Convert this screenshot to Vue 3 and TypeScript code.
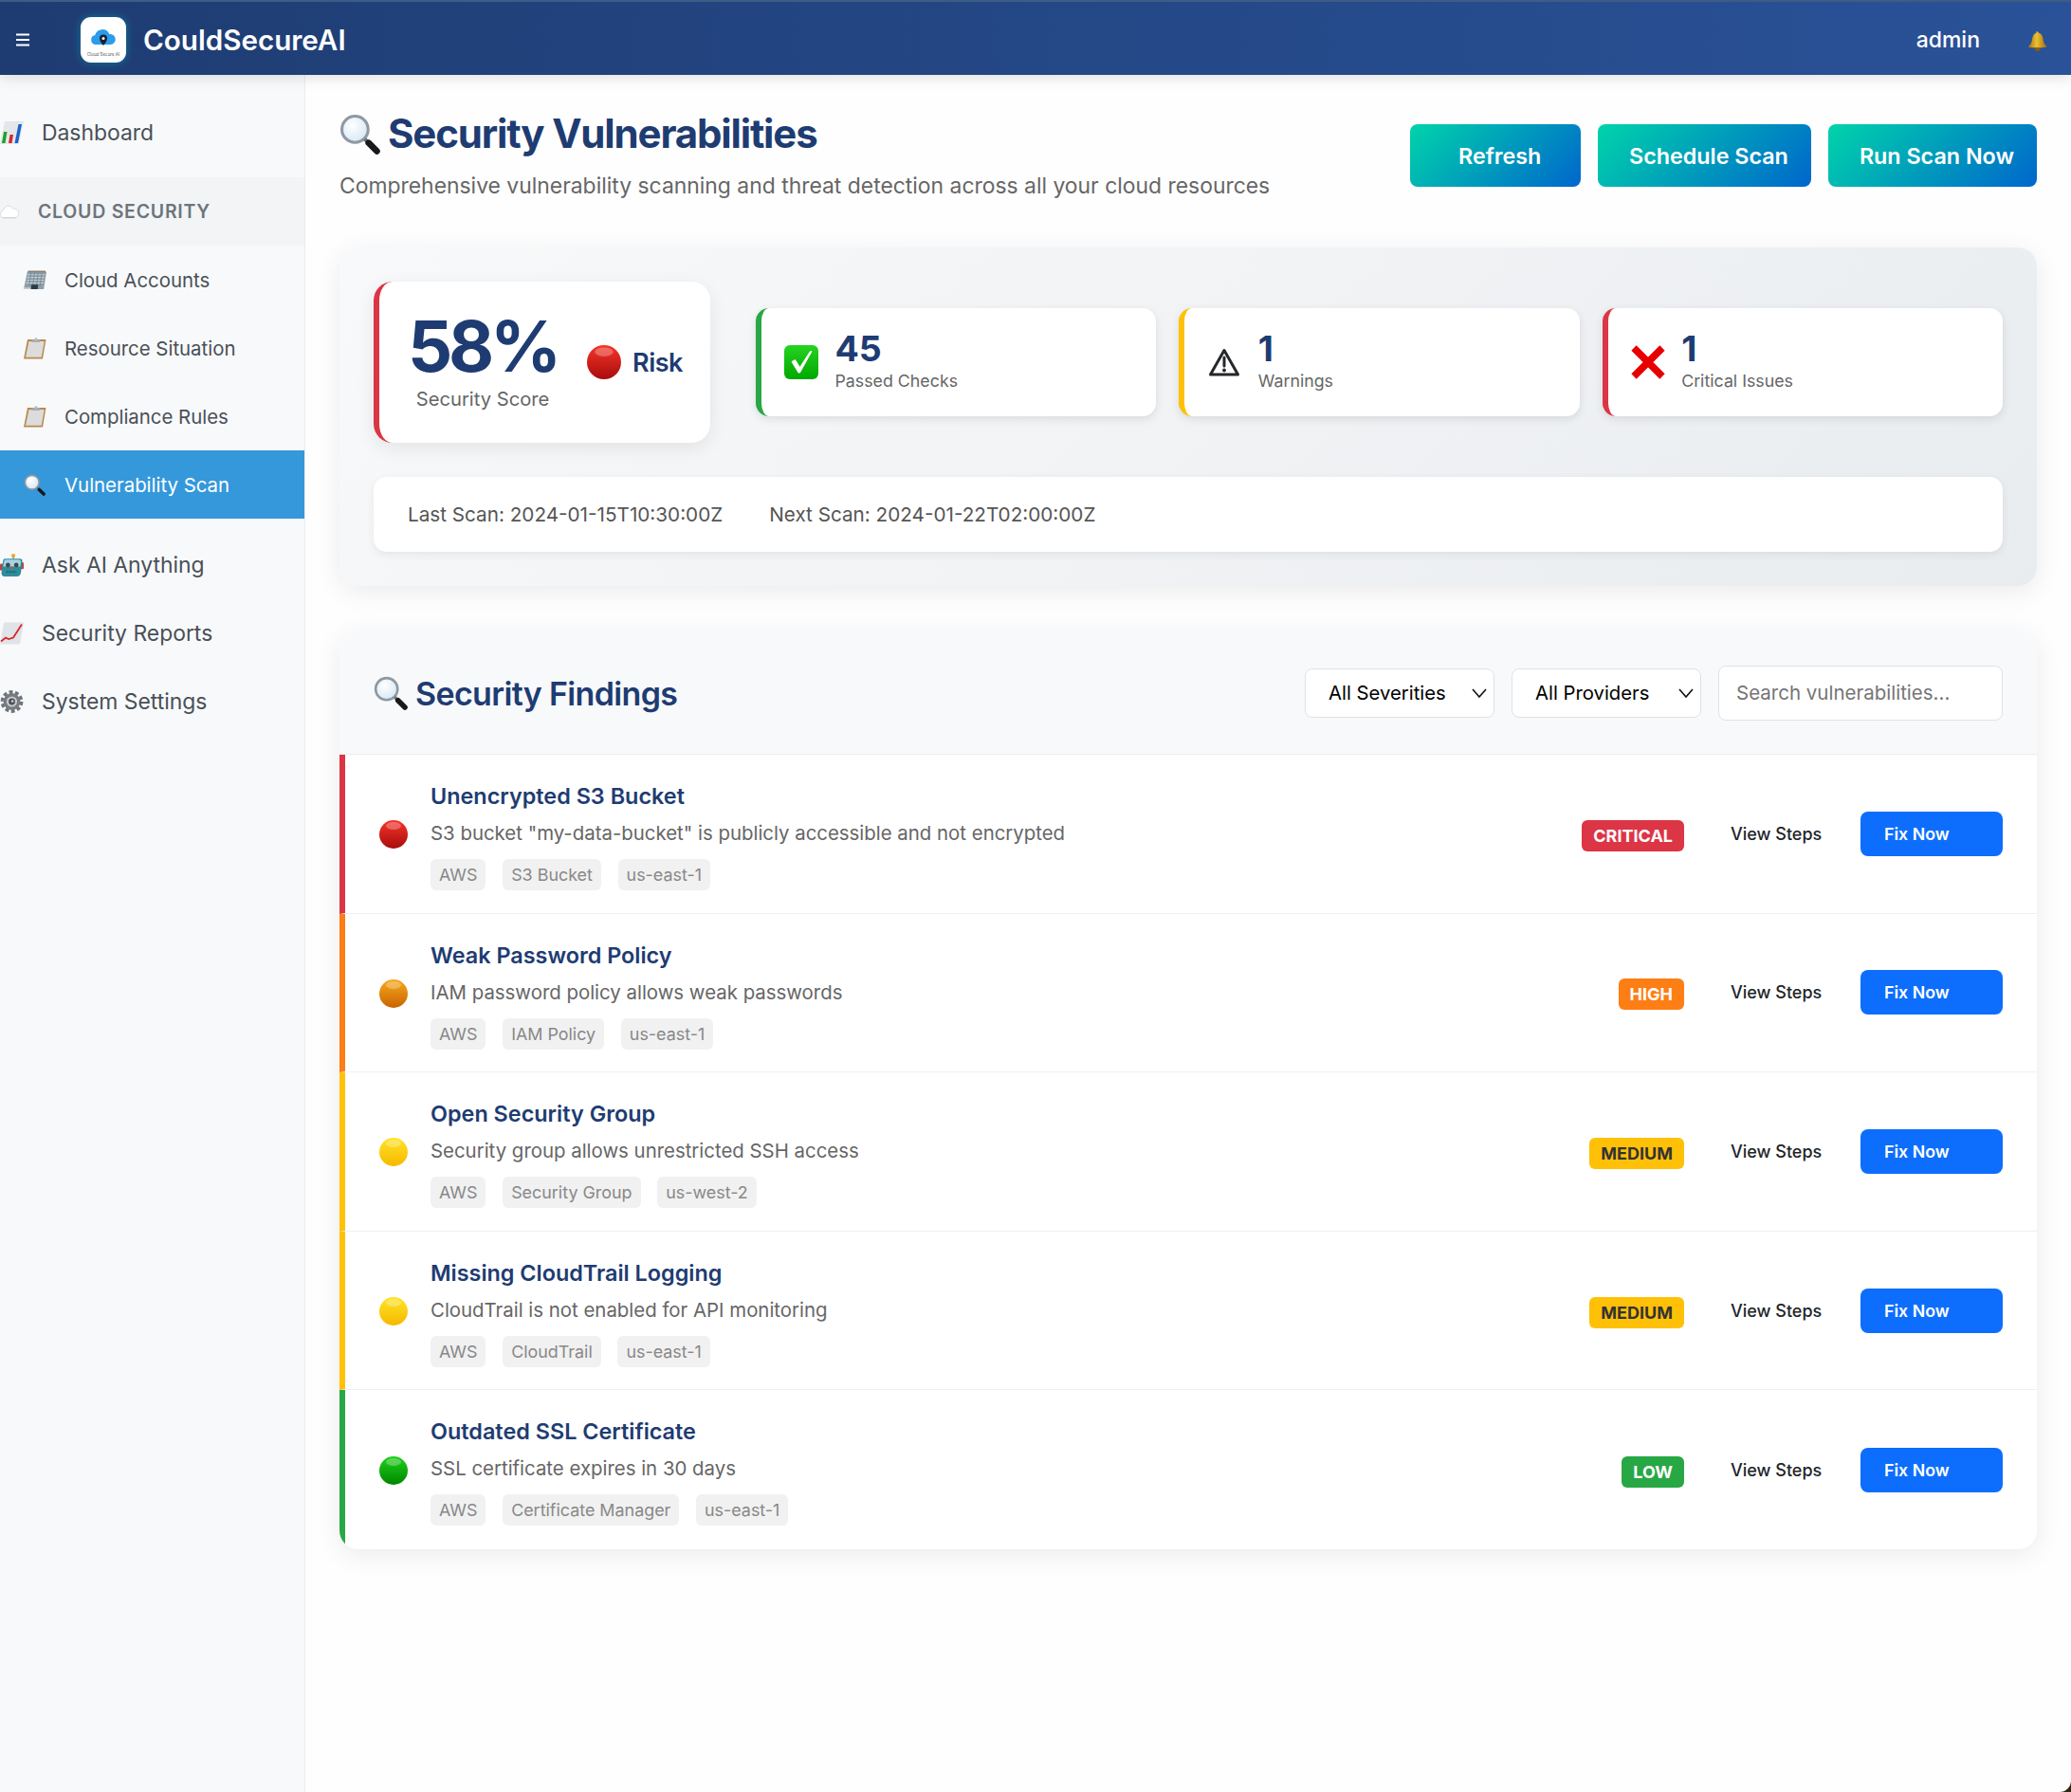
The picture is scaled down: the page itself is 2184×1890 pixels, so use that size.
<script setup lang="ts">
interface NavItem {
  label: string;
  icon: string;
  active?: boolean;
}

interface Finding {
  title: string;
  desc: string;
  tags: string[];
  severity: "critical" | "high" | "medium" | "low";
}

const subItems: NavItem[] = [
  { label: "Cloud Accounts", icon: "building" },
  { label: "Resource Situation", icon: "clipboard" },
  { label: "Compliance Rules", icon: "clipboard" },
  { label: "Vulnerability Scan", icon: "mag", active: true },
];

const lowerItems: NavItem[] = [
  { label: "Ask AI Anything", icon: "robot" },
  { label: "Security Reports", icon: "trend" },
  { label: "System Settings", icon: "gear" },
];

const stats = [
  { value: 45, label: "Passed Checks", icon: "check", tone: "passed" },
  { value: 1, label: "Warnings", icon: "warn", tone: "warning" },
  { value: 1, label: "Critical Issues", icon: "cross", tone: "critical" },
];

const findings: Finding[] = [
  {
    title: "Unencrypted S3 Bucket",
    desc: 'S3 bucket "my-data-bucket" is publicly accessible and not encrypted',
    tags: ["AWS", "S3 Bucket", "us-east-1"],
    severity: "critical",
  },
  {
    title: "Weak Password Policy",
    desc: "IAM password policy allows weak passwords",
    tags: ["AWS", "IAM Policy", "us-east-1"],
    severity: "high",
  },
  {
    title: "Open Security Group",
    desc: "Security group allows unrestricted SSH access",
    tags: ["AWS", "Security Group", "us-west-2"],
    severity: "medium",
  },
  {
    title: "Missing CloudTrail Logging",
    desc: "CloudTrail is not enabled for API monitoring",
    tags: ["AWS", "CloudTrail", "us-east-1"],
    severity: "medium",
  },
  {
    title: "Outdated SSL Certificate",
    desc: "SSL certificate expires in 30 days",
    tags: ["AWS", "Certificate Manager", "us-east-1"],
    severity: "low",
  },
];

const balls = [
  { id: "critical", top: "#f5352a", bottom: "#a80c0c" },
  { id: "high", top: "#f7a91e", bottom: "#c96400" },
  { id: "medium", top: "#ffe426", bottom: "#f6b800" },
  { id: "low", top: "#1fd01a", bottom: "#008600" },
];
</script>

<template>
  <div class="page">
    <svg class="defs" aria-hidden="true">
      <defs>
        <linearGradient v-for="b in balls" :id="'grad-' + b.id" :key="b.id" x1="0" y1="0" x2="0" y2="1">
          <stop offset="0" :stop-color="b.top" />
          <stop offset="1" :stop-color="b.bottom" />
        </linearGradient>
        <linearGradient id="grad-check" x1="0" y1="0" x2="0" y2="1">
          <stop offset="0" stop-color="#27d321" />
          <stop offset="1" stop-color="#00a800" />
        </linearGradient>
        <linearGradient id="grad-bell" x1="0" y1="0" x2="1" y2="0">
          <stop offset="0" stop-color="#a87408" />
          <stop offset="0.45" stop-color="#efc033" />
          <stop offset="1" stop-color="#a06c08" />
        </linearGradient>
        <radialGradient id="grad-lens" cx="0.4" cy="0.35" r="0.8">
          <stop offset="0" stop-color="#ffffff" />
          <stop offset="1" stop-color="#cfe3f2" />
        </radialGradient>
      </defs>

      <symbol id="i-chart" viewBox="0 0 25 24">
        <polygon points="5,0 25,0 20,24 0,24" fill="#e3e6ea" />
        <polygon points="2,23 4,11 7.5,11 5.5,23" fill="#1ba326" />
        <polygon points="9,23 10.5,14 14,14 12.5,23" fill="#d8262c" />
        <polygon points="15.5,23 19.5,3 23,3 19,23" fill="#1c62c9" />
      </symbol>

      <symbol id="i-cloud" viewBox="0 0 20 18">
        <path d="M4 16a4 4 0 0 1-.6-7.900A5.500 5.500 0 0 1 13.600 6a4.900 4.900 0 0 1 1.900 10z" fill="#ffffff" stroke="#d4d7dc" stroke-width="0.8" />
        <path d="M4 16a4 4 0 0 1-2.400-1h16a4.800 4.800 0 0 1-2.100 1z" fill="#d0d3d9" />
      </symbol>

      <symbol id="i-building" viewBox="0 0 26 22">
        <polygon points="5,2 26,2 23,21 1,21" fill="#8d9ea8" />
        <polygon points="6,0.5 25,0.5 25,2.5 5,2.5" fill="#8b8172" />
        <path d="M5 5h19M5 8h18.500M4.500 11h18.500M4 14h18.500" stroke="#c4d3db" stroke-width="1.2" />
        <path d="M9 3l-2 14M13 3l-2 14M17 3l-2 14M21 3l-2 14" stroke="#6f828e" stroke-width="0.8" />
        <polygon points="9.5,16 17,16 16.3,21 8.7,21" fill="#2f3b44" />
        <polygon points="1,19 9,19 8.7,21 1,21" fill="#c9ced2" />
      </symbol>

      <symbol id="i-clipboard" viewBox="0 0 24 23">
        <polygon points="4.5,2 24,2 20.5,22.5 0.5,22.5" fill="#b98a4b" />
        <polygon points="6,4 22.2,4 19.2,20.8 2.5,20.8" fill="#dcdcdc" />
        <polygon points="9,2.5 18,2.5 17.4,5 8.6,5" fill="#a9afb5" />
        <circle cx="13.5" cy="1.6" r="1.5" fill="#bfc4c9" />
      </symbol>

      <symbol id="i-mag" viewBox="0 0 42 42">
        <circle cx="16" cy="16" r="13.5" fill="url(#grad-lens)" stroke="#8e99a3" stroke-width="3" />
        <path d="M26 26l3 3" stroke="#70757a" stroke-width="4" />
        <path d="M30 30l8.500 8.500" stroke="#17191c" stroke-width="6.5" stroke-linecap="round" />
      </symbol>

      <symbol id="i-robot" viewBox="0 0 24 23">
        <circle cx="13.5" cy="2" r="2" fill="#f3a81f" />
        <rect x="12.9" y="3" width="1.2" height="3" fill="#8d99a0" />
        <rect x="0" y="10" width="3.5" height="7" rx="1.2" fill="#b34a3f" />
        <rect x="20.5" y="8.5" width="3.5" height="7" rx="1.2" fill="#b34a3f" />
        <path d="M5 5h15q3 0 2.500 3l-1.300 11q-.5 4-4 4H5q-4 0-3.500-4L3 8q.3-3 2-3z" fill="#2f8d9b" />
        <path d="M6 6h13q2.500 0 2 3l-.5 4H3.200l.7-4q.3-3 2.100-3z" fill="#a9d3df" />
        <circle cx="8" cy="11.5" r="2.3" fill="#3a4a54" />
        <circle cx="16.5" cy="11.5" r="2.3" fill="#3a4a54" />
        <path d="M11 13h2.400l-.4 2.500h-2z" fill="#d34f3f" />
        <path d="M6.500 18.500h10" stroke="#1c5c68" stroke-width="1.8" stroke-dasharray="1.4 1" />
      </symbol>

      <symbol id="i-trend" viewBox="0 0 25 23">
        <polygon points="4,0 25,0 21,23 0,23" fill="#e0e3e8" />
        <path d="M1 20l5-4 3 1.500 5-1.500L23 2" fill="none" stroke="#d3272b" stroke-width="1.8" />
      </symbol>

      <symbol id="i-gear" viewBox="0 0 24 24">
        <circle cx="12" cy="12" r="10" fill="none" stroke="#6f747b" stroke-width="3.8" stroke-dasharray="3.8 2.48" />
        <circle cx="12" cy="12" r="9" fill="#777c83" />
        <circle cx="12" cy="12" r="5.6" fill="#c6c9cd" />
        <circle cx="12" cy="12" r="3.4" fill="#4c5056" />
        <circle cx="12.6" cy="11.6" r="1.3" fill="#c9ccd0" />
      </symbol>

      <symbol id="i-bell" viewBox="0 0 24 24">
        <path d="M11.500 2c.9 0 1.600.8 1.700 1.600 3.600 1 5 4.200 5.300 8 .3 3.200 1.500 5 3.500 6.600.4.500.1 1.300-.6 1.400-4 .8-11 1-18.300.3-.8-.2-1-1-.5-1.500 2.300-2 3.200-3.600 3.600-6.800.4-3.700 1.500-6.700 4.700-7.800-.1-.9.500-1.800.6-1.800z" fill="url(#grad-bell)" />
        <ellipse cx="12" cy="21.8" rx="2.8" ry="2.1" fill="#8a5c08" />
      </symbol>

      <symbol v-for="b in balls" :id="'i-ball-' + b.id" :key="b.id" viewBox="0 0 30 30">
        <circle cx="15" cy="15" r="15" :fill="'url(#grad-' + b.id + ')'" />
        <ellipse cx="15" cy="6" rx="8" ry="4" fill="#ffffff" opacity="0.28" />
      </symbol>

      <symbol id="i-check" viewBox="0 0 36 36">
        <rect width="36" height="36" rx="6" fill="url(#grad-check)" />
        <path d="M8 17.500l7 11.500 1.500 0L29 6.500l-1.500 0-11 17-5-8z" fill="#ffffff" stroke="#ffffff" stroke-width="1" />
      </symbol>

      <symbol id="i-warn" viewBox="0 0 36 36">
        <path d="M18 5.500L32.500 31h-29z" fill="none" stroke="#24272b" stroke-width="3" stroke-linejoin="round" />
        <path d="M18 13v9" stroke="#24272b" stroke-width="3" stroke-linecap="round" />
        <circle cx="18" cy="26.5" r="1.9" fill="#24272b" />
      </symbol>

      <symbol id="i-cross" viewBox="0 0 36 36">
        <path d="M3 3l30 30M33 3L3 33" stroke="#e80000" stroke-width="7.5" />
      </symbol>
    </svg>

    <header class="topbar">
      <div class="brand">
        <svg class="burger" viewBox="0 0 14 14" aria-hidden="true">
          <path d="M0 1.500h14M0 7h14M0 12.500h14" stroke="#ffffff" stroke-width="2.2" />
        </svg>
        <div class="logo">
          <svg class="logo-cloud" viewBox="0 0 28 22" aria-hidden="true">
            <path d="M6 17a5 5 0 0 1-.8-9.900A8 8 0 0 1 20.300 6 5.500 5.500 0 0 1 22 17z" fill="#2b9cec" />
            <path d="M14 6.500a4 4 0 0 1 4 4c0 3-4 7.500-4 7.500s-4-4.500-4-7.500a4 4 0 0 1 4-4z" fill="#16222e" />
            <circle cx="14" cy="10.5" r="1.5" fill="#ffffff" />
          </svg>
          <span class="logo-text">Cloud Secure AI</span>
        </div>
        <span class="app-name">CouldSecureAI</span>
      </div>
      <div class="user">
        <span class="user-name">admin</span>
        <svg class="bell"><use href="#i-bell" /></svg>
      </div>
    </header>

    <div class="body">
      <aside class="sidebar">
        <a class="nav-item top">
          <svg class="nav-icon"><use href="#i-chart" /></svg>
          <span>Dashboard</span>
        </a>
        <div class="nav-group">
          <svg class="group-icon"><use href="#i-cloud" /></svg>
          <span>CLOUD SECURITY</span>
        </div>
        <a v-for="item in subItems" :key="item.label" class="nav-item sub" :class="{ active: item.active }">
          <svg class="nav-icon"><use :href="'#i-' + item.icon" /></svg>
          <span>{{ item.label }}</span>
        </a>
        <div class="lower">
          <a v-for="item in lowerItems" :key="item.label" class="nav-item top">
            <svg class="nav-icon"><use :href="'#i-' + item.icon" /></svg>
            <span>{{ item.label }}</span>
          </a>
        </div>
      </aside>

      <main class="main">
        <div class="page-head">
          <div>
            <h1 class="page-title">
              <svg class="title-icon"><use href="#i-mag" /></svg>
              <span>Security Vulnerabilities</span>
            </h1>
            <p class="page-sub">Comprehensive vulnerability scanning and threat detection across all your cloud resources</p>
          </div>
          <div class="head-actions">
            <button class="grad-btn refresh">Refresh</button>
            <button class="grad-btn">Schedule Scan</button>
            <button class="grad-btn run">Run Scan Now</button>
          </div>
        </div>

        <section class="overview">
          <div class="overview-top">
            <div class="score-card">
              <div class="score-main">
                <div class="score-value">58%</div>
                <div class="score-label">Security Score</div>
              </div>
              <div class="score-risk">
                <svg class="risk-dot"><use href="#i-ball-critical" /></svg>
                <span>Risk</span>
              </div>
            </div>
            <div class="stats">
              <div v-for="s in stats" :key="s.label" class="stat" :class="s.tone">
                <svg class="stat-icon"><use :href="'#i-' + s.icon" /></svg>
                <div class="stat-text">
                  <div class="stat-value">{{ s.value }}</div>
                  <div class="stat-label">{{ s.label }}</div>
                </div>
              </div>
            </div>
          </div>
          <div class="scan-times">
            <span>Last Scan: 2024-01-15T10:30:00Z</span>
            <span>Next Scan: 2024-01-22T02:00:00Z</span>
          </div>
        </section>

        <section class="findings">
          <div class="findings-head">
            <h2 class="findings-title">
              <svg class="findings-icon"><use href="#i-mag" /></svg>
              <span>Security Findings</span>
            </h2>
            <div class="filters">
              <div class="select-wrap">
                <select class="filter-select">
                  <option>All Severities</option>
                </select>
                <svg class="chevron" viewBox="0 0 16 10" aria-hidden="true">
                  <path d="M1 1l7 8 7-8" fill="none" stroke="#111111" stroke-width="1.6" />
                </svg>
              </div>
              <div class="select-wrap">
                <select class="filter-select">
                  <option>All Providers</option>
                </select>
                <svg class="chevron" viewBox="0 0 16 10" aria-hidden="true">
                  <path d="M1 1l7 8 7-8" fill="none" stroke="#111111" stroke-width="1.6" />
                </svg>
              </div>
              <input class="filter-search" type="text" placeholder="Search vulnerabilities..." />
            </div>
          </div>

          <div v-for="f in findings" :key="f.title" class="finding" :class="f.severity">
            <svg class="finding-dot"><use :href="'#i-ball-' + f.severity" /></svg>
            <div class="finding-body">
              <div class="finding-title">{{ f.title }}</div>
              <div class="finding-desc">{{ f.desc }}</div>
              <div class="finding-tags">
                <span v-for="t in f.tags" :key="t" class="tag">{{ t }}</span>
              </div>
            </div>
            <span class="badge">{{ f.severity.toUpperCase() }}</span>
            <button class="steps-btn">View Steps</button>
            <button class="fix-btn">Fix Now</button>
          </div>
        </section>
      </main>
    </div>

    <svg class="window-corner" viewBox="0 0 12 12" aria-hidden="true">
      <path d="M12 0v12H0A12 12 0 0 0 12 0z" fill="#2f2612" />
    </svg>
  </div>
</template>

<style>
html,
body {
  margin: 0;
  background: #ffffff;
}
</style>

<style scoped>
.page {
  position: relative;
  width: 2184px;
  height: 1890px;
  overflow: hidden;
  font-family: Inter, "Liberation Sans", sans-serif;
  background: #fefefe;
  color: #212529;
}

.defs {
  position: absolute;
  width: 0;
  height: 0;
}

.topbar {
  position: relative;
  z-index: 2;
  box-sizing: border-box;
  height: 79px;
  display: flex;
  align-items: center;
  justify-content: space-between;
  padding: 3px 24px 0 17px;
  border-top: 2px solid #3d5c86;
  background: linear-gradient(90deg, #1e3c72, #2a5298);
  box-shadow: 0 3px 14px rgba(0, 0, 0, 0.12);
}

.brand {
  display: flex;
  align-items: center;
}

.burger {
  width: 14px;
  height: 14px;
  margin-right: 54px;
}

.logo {
  position: relative;
  width: 48px;
  height: 48px;
  border-radius: 11px;
  background: #ffffff;
  box-shadow: 0 0 10px rgba(0, 190, 210, 0.45);
  margin-right: 18px;
}

.logo-cloud {
  position: absolute;
  left: 10px;
  top: 12px;
  width: 28px;
  height: 22px;
}

.logo-text {
  position: absolute;
  left: 0;
  right: 0;
  top: 37px;
  font-size: 4.5px;
  line-height: 6px;
  text-align: center;
  color: #555555;
  white-space: nowrap;
}

.app-name {
  font-size: 29.6px;
  font-weight: 600;
  color: #ffffff;
}

.user {
  display: flex;
  align-items: center;
  gap: 49px;
}

.user-name {
  font-size: 23px;
  font-weight: 500;
  color: #ffffff;
}

.bell {
  width: 23px;
  height: 23px;
}

.body {
  display: flex;
  height: 1811px;
}

.sidebar {
  box-sizing: border-box;
  width: 322px;
  flex: none;
  padding-top: 25px;
  background: #f8f9fb;
  border-right: 1px solid #e9ecef;
}

.nav-item {
  box-sizing: border-box;
  height: 72px;
  display: flex;
  align-items: center;
  color: #495057;
}

.nav-item.top {
  font-size: 22.9px;
}

.nav-item.top .nav-icon {
  width: 25px;
  height: 24px;
  margin-right: 19px;
}

.nav-item.sub {
  padding-left: 24px;
  font-size: 20.4px;
}

.nav-item.sub .nav-icon {
  width: 25px;
  height: 23px;
  margin-right: 19px;
}

.nav-item.active {
  background: #3498db;
  color: #ffffff;
}

.nav-group {
  box-sizing: border-box;
  height: 72px;
  margin-top: 11px;
  display: flex;
  align-items: center;
  background: #f3f4f6;
  color: #6c757d;
  font-size: 19.5px;
  font-weight: 600;
  letter-spacing: 0.75px;
}

.group-icon {
  width: 20px;
  height: 18px;
  margin-right: 20px;
}

.lower {
  margin-top: 13px;
}

.main {
  flex: 1;
  min-width: 0;
  padding: 0 36px;
}

.page-head {
  display: flex;
  justify-content: space-between;
  height: 182px;
}

.page-title {
  display: flex;
  align-items: center;
  gap: 8px;
  margin: 37px 0 0;
  font-size: 42px;
  line-height: 50px;
  font-weight: 700;
  letter-spacing: -1.17px;
  color: #1e3c72;
}

.title-icon {
  width: 43px;
  height: 43px;
}

.page-sub {
  margin: 15px 0 0;
  font-size: 22.9px;
  line-height: 30px;
  color: #666666;
}

.head-actions {
  display: flex;
  gap: 18px;
  margin-top: 52px;
  height: 66px;
}

.grad-btn {
  box-sizing: border-box;
  height: 66px;
  padding: 0 24px 0 33px;
  border: none;
  border-radius: 8px;
  background: linear-gradient(135deg, #00d4aa, #0066cc);
  color: #ffffff;
  font-family: inherit;
  font-size: 23.3px;
  font-weight: 600;
}

.grad-btn.refresh {
  width: 180px;
  padding: 0 17px 0 51px;
  text-align: left;
}

.overview {
  box-sizing: border-box;
  height: 357px;
  padding: 36px;
  border-radius: 20px;
  background: linear-gradient(135deg, #f8f9fa, #e9ecef);
  box-shadow: 0 6px 28px rgba(0, 0, 0, 0.08);
}

.overview-top {
  display: flex;
  align-items: center;
  gap: 48px;
}

.score-card {
  box-sizing: border-box;
  width: 355px;
  height: 170px;
  flex: none;
  display: flex;
  align-items: center;
  padding-left: 30px;
  gap: 31px;
  background: #ffffff;
  border-left: 6px solid #dc3545;
  border-radius: 20px;
  box-shadow: 0 6px 20px rgba(0, 0, 0, 0.08);
}

.score-main {
  padding-bottom: 6px;
}

.score-value {
  font-size: 74px;
  line-height: 80px;
  font-weight: 700;
  letter-spacing: -4.2px;
  color: #1e3c72;
}

.score-label {
  margin-top: 3px;
  text-align: center;
  font-size: 20.2px;
  line-height: 26px;
  color: #666666;
}

.score-risk {
  display: flex;
  align-items: center;
  gap: 12px;
  font-size: 27px;
  font-weight: 600;
  color: #1e3c72;
  letter-spacing: -0.5px;
}

.risk-dot {
  width: 36px;
  height: 36px;
}

.stats {
  flex: 1;
  display: grid;
  grid-template-columns: repeat(3, 1fr);
  gap: 24px;
}

.stat {
  box-sizing: border-box;
  height: 114px;
  display: flex;
  align-items: center;
  gap: 17.5px;
  padding-left: 24px;
  background: #ffffff;
  border-left: 6px solid #28a745;
  border-radius: 14px;
  box-shadow: 0 3px 10px rgba(0, 0, 0, 0.1);
}

.stat.warning {
  border-left-color: #ffc107;
}

.stat.critical {
  border-left-color: #dc3545;
}

.stat-icon {
  width: 36px;
  height: 36px;
}

.stat-text {
  padding-bottom: 5px;
}

.stat-value {
  font-size: 37.5px;
  line-height: 44px;
  font-weight: 700;
  color: #1e3c72;
}

.stat-label {
  font-size: 17.8px;
  line-height: 24px;
  color: #666666;
}

.scan-times {
  box-sizing: border-box;
  height: 79px;
  margin-top: 36px;
  display: flex;
  align-items: center;
  gap: 49px;
  padding-left: 36px;
  background: #ffffff;
  border-radius: 14px;
  box-shadow: 0 3px 10px rgba(0, 0, 0, 0.07);
  font-size: 20.7px;
  color: #555555;
}

.findings {
  margin-top: 47px;
  border-radius: 20px;
  overflow: hidden;
  background: #ffffff;
  box-shadow: 0 6px 28px rgba(0, 0, 0, 0.08);
}

.findings-head {
  box-sizing: border-box;
  height: 131px;
  display: flex;
  align-items: center;
  justify-content: space-between;
  padding: 0 36px;
  background: #f8f9fa;
  border-bottom: 1px solid #e9ecef;
}

.findings-title {
  display: flex;
  align-items: center;
  gap: 8px;
  margin: 2px 0 0;
  font-size: 34px;
  font-weight: 600;
  letter-spacing: -0.65px;
  color: #1e3c72;
}

.findings-icon {
  width: 36px;
  height: 36px;
}

.filters {
  display: flex;
  align-items: center;
  gap: 18px;
  margin-top: 1px;
}

.select-wrap {
  position: relative;
}

.filter-select {
  box-sizing: border-box;
  display: block;
  width: 200px;
  height: 52px;
  padding: 0 0 0 24px;
  appearance: none;
  border: 1.5px solid #dee2e6;
  border-radius: 8px;
  background: #ffffff;
  color: #000000;
  font-family: inherit;
  font-size: 20.3px;
}

.chevron {
  position: absolute;
  right: 8px;
  top: 21px;
  width: 16px;
  height: 10px;
  pointer-events: none;
}

.filter-search {
  box-sizing: border-box;
  width: 300px;
  height: 58px;
  padding: 0 18px;
  border: 1.5px solid #dee2e6;
  border-radius: 8px;
  background: #ffffff;
  font-family: inherit;
  font-size: 20.5px;
}

.filter-search::placeholder {
  color: #757575;
}

.finding {
  box-sizing: border-box;
  height: 167.6px;
  display: flex;
  align-items: center;
  padding: 0 36px;
  border-left: 6px solid #28a745;
  border-bottom: 1px solid #f0f0f0;
}

.finding:last-child {
  border-bottom: none;
}

.finding-dot {
  width: 30px;
  height: 30px;
  flex: none;
  margin: 2px 24px 0 0;
}

.finding-body {
  flex: 1;
  min-width: 0;
  align-self: flex-start;
  margin-top: 29px;
}

.finding-title {
  font-size: 23.4px;
  line-height: 30px;
  font-weight: 600;
  color: #1e3c72;
}

.finding-desc {
  margin-top: 9px;
  font-size: 20.4px;
  line-height: 30px;
  color: #666666;
}

.finding-tags {
  display: flex;
  gap: 17.7px;
  margin-top: 12px;
}

.tag {
  box-sizing: border-box;
  height: 33px;
  padding: 0 9px;
  display: flex;
  align-items: center;
  border-radius: 6px;
  background: #f1f1f1;
  color: #888888;
  font-size: 17.9px;
}

.badge {
  box-sizing: border-box;
  height: 33px;
  margin-top: 4px;
  padding: 0 12px;
  display: flex;
  align-items: center;
  border-radius: 6px;
  background: #28a745;
  color: #ffffff;
  font-size: 18px;
  font-weight: 700;
}

.finding.critical {
  border-left-color: #dc3545;
}

.finding.high {
  border-left-color: #fd7e14;
}

.finding.medium {
  border-left-color: #ffc107;
}

.critical .badge {
  background: #dc3545;
}

.high .badge {
  background: #fd7e14;
}

.medium .badge {
  background: #ffc107;
  color: #333333;
}

.steps-btn {
  width: 137px;
  margin-left: 49px;
  padding: 0;
  text-align: left;
  border: none;
  background: none;
  color: #212529;
  font-family: inherit;
  font-size: 18px;
  font-weight: 500;
}

.fix-btn {
  box-sizing: border-box;
  width: 150px;
  height: 47px;
  padding: 0 0 0 25px;
  text-align: left;
  border: none;
  border-radius: 8px;
  background: #0d6efd;
  color: #ffffff;
  font-family: inherit;
  font-size: 17.8px;
  font-weight: 600;
}

.window-corner {
  position: absolute;
  right: 0;
  bottom: 0;
  width: 12px;
  height: 12px;
}
</style>
